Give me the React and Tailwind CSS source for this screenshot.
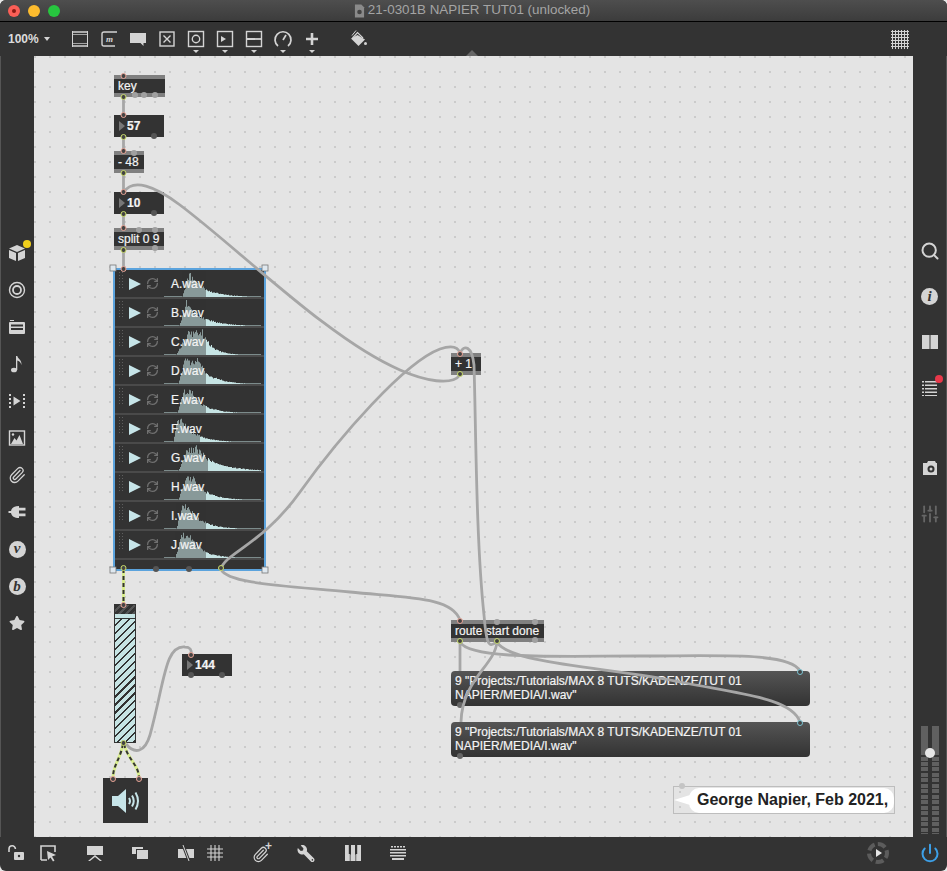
import React from 'react';
import { FaStar, FaWrench } from 'react-icons/fa';
import { Paperclip, Search, SlidersVertical, Power, RefreshCw } from 'lucide-react';

const files = [
  { name: 'A.wav', start: 18, peak: 25, flat: 0, tau: 16, played: 42, seed: 3 },
  { name: 'B.wav', start: 15, peak: 22, flat: 0, tau: 17, played: 42, seed: 7 },
  { name: 'C.wav', start: 12, peak: 24, flat: 14, tau: 10, played: 42, seed: 11 },
  { name: 'D.wav', start: 14, peak: 20, flat: 14, tau: 13, played: 42, seed: 5 },
  { name: 'E.wav', start: 13, peak: 20, flat: 6, tau: 13, played: 42, seed: 9 },
  { name: 'F.wav', start: 9, peak: 13, flat: 4, tau: 14, played: 36, seed: 2 },
  { name: 'G.wav', start: 14, peak: 24, flat: 8, tau: 20, played: 44, seed: 13 },
  { name: 'H.wav', start: 14, peak: 22, flat: 6, tau: 14, played: 42, seed: 4 },
  { name: 'I.wav', start: 12, peak: 18, flat: 6, tau: 14, played: 42, seed: 8 },
  { name: 'J.wav', start: 11, peak: 17, flat: 8, tau: 13, played: 42, seed: 6 },
];

function wavePath(f) {
  let d = 'M0 26';
  for (let x = 0; x < 97; x++) {
    const n = 0.68 + 0.32 * Math.abs(Math.sin((x + 1) * f.seed * 12.9898) * 3.7 % 1);
    let a = 0;
    if (x >= f.start && x < f.peak) a = (x - f.start) / (f.peak - f.start);
    else if (x >= f.peak && x < f.peak + f.flat) a = 1;
    else if (x >= f.peak + f.flat) a = Math.exp(-(x - f.peak - f.flat) / f.tau);
    const h = Math.max(0.6, a * n * 26);
    d += ` L${x} ${(26 - h).toFixed(1)} L${x + 1} ${(26 - h).toFixed(1)}`;
  }
  return d + ' L97 26 Z';
}

const Svg = ({ children, className = 'w-5 h-5 text-[#d4d4d4]', box = '0 0 20 20' }) => (
  <svg viewBox={box} className={className} fill="currentColor">{children}</svg>
);

const line = { fill: 'none', stroke: 'currentColor', strokeWidth: 1.4 };

const topIcons = [
  { drop: false, el: <Svg><path {...line} d="M2.500 2v16M17.500 2v16" strokeWidth="1" /><path {...line} strokeWidth="1.600" d="M2 3h16M2 17h16" /><path {...line} strokeWidth="1" d="M3 5.500h14M3 14.500h14" opacity=".7" /></Svg> },
  { drop: false, el: <Svg><path {...line} d="M16 17H5q-2 0-2-2V5q0-2 2-2h13" /><text x="7" y="13" fontFamily="Liberation Serif, serif" fontStyle="italic" fontWeight="700" fontSize="9">m</text></Svg> },
  { drop: false, el: <Svg><path d="M2 4h16v10h-2.500v3l-3-3H2z" /></Svg> },
  { drop: false, el: <Svg><rect x="3" y="3" width="14" height="14" {...line} /><path {...line} d="M6.500 6.500l7 7M13.500 6.500l-7 7" /></Svg> },
  { drop: true, el: <Svg><rect x="2.500" y="2.500" width="15" height="15" {...line} /><circle cx="10" cy="10" r="3.700" {...line} /></Svg> },
  { drop: true, el: <Svg><rect x="2.500" y="2.500" width="15" height="15" {...line} /><path d="M6 7l5 3-5 3z" /></Svg> },
  { drop: true, el: <Svg><rect x="2.500" y="2.500" width="15" height="15" {...line} /><path d="M3 10h14" {...line} strokeWidth="1.800" /></Svg> },
  { drop: true, el: <Svg><path {...line} strokeWidth="1.700" d="M5 17a8 8 0 1 1 10 0" /><path {...line} strokeWidth="1.700" d="M10 11l3-5" /></Svg> },
  { drop: true, el: <Svg><path d="M8.700 4h2.600v4.700H16v2.600h-4.700V16H8.700v-4.700H4V8.700h4.700z" /></Svg> },
];

const leftIcons = [
  <span className="relative flex" key="pkg">
    <Svg><path d="M10 2l8 3.500-8 3.500-8-3.500zM2 7l7 3v8l-7-3zM18 7l-7 3v8l7-3z" /></Svg>
    <span className="absolute -top-[3px] -right-[4px] w-2 h-2 rounded-full bg-[#f0cf1c]" />
  </span>,
  <Svg key="target"><circle cx="10" cy="10" r="7.500" {...line} /><circle cx="10" cy="10" r="4" {...line} strokeWidth="1.800" /></Svg>,
  <Svg key="tv"><rect x="2" y="5" width="16" height="12" rx="1" /><path d="M4 7.500h12v2H4zM4 11h12v2H4z" fill="#333" /><path d="M3 3h4v1H3z" /></Svg>,
  <Svg key="note"><ellipse cx="7" cy="16" rx="3" ry="2.300" /><path d="M9 16V2h1.300c.5 3 5 4 4 9-.5-3-2.500-4-4-4.500V16z" /></Svg>,
  <Svg key="film"><path d="M2 3h2v2H2zM2 7h2v2H2zM2 11h2v2H2zM2 15h2v2H2zM16 3h2v2h-2zM16 7h2v2h-2zM16 11h2v2h-2zM16 15h2v2h-2zM6.500 5.500l7 4.500-7 4.500z" /></Svg>,
  <Svg key="image"><rect x="2.500" y="3" width="15" height="14" {...line} /><path d="M4 16l3.500-6 2 2.500 3-5.500 3.500 9z" /><circle cx="6" cy="6.500" r="1.200" /></Svg>,
  <Paperclip key="clip" className="w-[18px] h-[18px] text-[#d4d4d4]" strokeWidth={1.7} />,
  <Svg key="plug"><path d="M1.500 9h2.500c.5-3 3.500-5 8-5v12c-4.500 0-7.500-2-8-5H1.500zM12 5.800h6.500v2.600H12zM12 11.600h6.500v2.600H12z" /></Svg>,
  <span key="v" className="flex items-center justify-center w-[17px] h-[17px] rounded-full bg-[#d4d4d4] text-[#333] font-['Liberation_Serif',serif] italic font-bold text-[15px] leading-none pb-[2px]">v</span>,
  <span key="b" className="flex items-center justify-center w-[17px] h-[17px] rounded-full bg-[#d4d4d4] text-[#333] font-['Liberation_Serif',serif] italic font-bold text-[15px] leading-none">b</span>,
  <FaStar key="star" className="w-[16px] h-[16px] text-[#d4d4d4]" />,
];

const Box = ({ pos, label }) => (
  <div className={`absolute ${pos} h-[22px] flex flex-col bg-[#808080]`}>
    <div className="mt-1 h-[14px] bg-[#333] text-[#f4f4f4] text-[12px] leading-[14px] pl-1 whitespace-nowrap">{label}</div>
  </div>
);

const NumBox = ({ pos, label }) => (
  <div className={`absolute ${pos} w-[50px] h-[22px] bg-[#333] flex items-center pl-[5px] gap-[2px] text-[#f4f4f4] text-[12px] font-bold`}>
    <span className="w-0 h-0 border-y-[5.5px] border-y-transparent border-l-[6px] border-l-[#777]" />
    {label}
  </div>
);

const Msg = ({ pos }) => (
  <div className={`absolute ${pos} left-[417px] w-[359px] h-[35px] rounded-[4px] bg-gradient-to-b from-[#555] to-[#333] text-[#f4f4f4] text-[12px] leading-[14px] pl-1 pt-[3px]`}>
    9 "Projects:/Tutorials/MAX 8 TUTS/KADENZE/TUT 01<br />NAPIER/MEDIA/I.wav"
  </div>
);

const inlet = '#e9a496';
const outlet = '#c9dc6a';

const greyCords = [
  'M123.500 97V115', 'M123.500 137V151', 'M123.500 173V192', 'M123.500 214V228', 'M123.500 250V268',
  'M460 375C452 386 425 381 400 370C330 340 240 250 180 205C155 186 133 178 124 192',
  'M221 569C225 553 262 545 300 492C340 436 405 362 440 349C452 345 458 347 460 353',
  'M221 569C226 584 290 586 350 592C410 598 452 597 460 620',
  'M460 353C464 344 472 346 474 365C476 430 476 540 484 615C486 640 488 650 496 642',
  'M460 642V671',
  'M460 642C470 660 560 656 640 656C720 656 790 652 800 671',
  'M497 642C510 665 620 668 680 682C740 694 792 698 800 722',
  'M497 642C495 665 462 680 461 722',
  'M126 744C135 755 145 752 150 735C165 680 165 645 185 647C190 647 192 650 191 654',
];

const signalCords = [
  'M123.500 569V604',
  'M123 744C120 760 113 765 113 778',
  'M124 744C128 760 139 765 139 778',
];

const ports = [
  [123.5, 76, inlet], [123.5, 97, outlet], [123.5, 115, inlet], [123.5, 137, outlet], [123.5, 151, inlet], [123.5, 173, outlet],
  [123.5, 192, inlet], [123.5, 214, outlet], [123.5, 228, inlet], [123.5, 250, outlet], [123.5, 269, inlet],
  [123.5, 568, outlet], [221, 568, outlet], [123.5, 605, inlet], [123.5, 743, outlet], [191, 655, inlet], [113, 779, inlet], [139, 779, inlet],
  [460, 354, inlet], [460, 374, outlet], [460, 621, inlet], [460, 641, outlet], [497, 641, outlet], [800, 672, '#7cc4d4'], [800, 723, '#7cc4d4'],
];

const bumps = [
  [135, 95, '#a0a0a0'], [144, 95, '#a0a0a0'], [155, 95, '#a0a0a0'], [154, 136, '#555'], [134, 153, '#a0a0a0'], [154, 213, '#555'],
  [139, 230, '#a0a0a0'], [155, 230, '#a0a0a0'], [155, 248, '#a0a0a0'], [156, 569, '#555'], [189, 569, '#555'], [191, 675, '#555'], [222, 675, '#555'],
  [497, 622, '#a0a0a0'], [535, 622, '#a0a0a0'], [535, 640, '#a0a0a0'], [460, 705, '#666'], [460, 756, '#666'], [682, 786, '#c4c4c4'],
];

const handles = [[113, 268], [265, 268], [113, 570], [265, 570]];

export default function App() {
  return (
    <div className="w-[947px] h-[871px] bg-[#e8e8e8] font-['Liberation_Sans',Arial,sans-serif]">
      <div className="w-full h-full flex flex-col rounded-[6px] overflow-hidden bg-[#333]">
        {/* title bar */}
        <div className="relative h-[22px] shrink-0 flex items-center justify-center bg-gradient-to-b from-[#4e4e4e] to-[#3c3c3c] border-b border-black">
          <div className="absolute left-2 top-[5px] flex gap-2">
            <span className="flex items-center justify-center w-3 h-3 rounded-full bg-[#fb5f57]"><span className="w-1 h-1 rounded-full bg-[#8a1a14]" /></span>
            <span className="w-3 h-3 rounded-full bg-[#fdbc2e]" />
            <span className="w-3 h-3 rounded-full bg-[#27c63f]" />
          </div>
          <svg viewBox="0 0 12 14" className="w-[11px] h-[14px] -ml-[3px]"><path d="M1 0h7l3 3v11H1z" fill="#8a8a8a" /><circle cx="6" cy="8" r="2.500" fill="#444" /></svg>
          <span className="text-[13.400px] text-[#a4a4a4] ml-[3px]">21-0301B NAPIER TUT01 (unlocked)</span>
        </div>

        {/* toolbar */}
        <div className="relative h-[34px] shrink-0 flex items-center text-[#d4d4d4]">
          <div className="w-[65px] pl-2 flex items-center gap-[5px] text-[12px] font-bold text-[#dcdcdc]">
            100%
            <span className="w-0 h-0 border-x-[3px] border-x-transparent border-t-[4px] border-t-[#d4d4d4]" />
          </div>
          {topIcons.map((t, i) => (
            <div key={i} className="relative w-[29px] h-5 flex justify-center">
              {t.el}
              {t.drop && <span className="absolute -bottom-[4px] w-0 h-0 border-x-[3px] border-x-transparent border-t-[3px] border-t-[#d4d4d4]" />}
            </div>
          ))}
          <div className="ml-[17px] w-[29px] flex justify-center">
            <Svg><path d="M9.500 6l7.500 4.500-6.500 6.500-7.500-7.500z" /><path d="M4.500 9l5-5.500 5.500 5.500" {...line} strokeWidth="1.200" /><path d="M4 6.500l4-5" {...line} strokeWidth="1" /><circle cx="17.500" cy="14.500" r="1.500" /></Svg>
          </div>
          <div className="ml-auto mr-[38px] w-[18px] h-[19px] bg-[radial-gradient(circle,#d4d4d4_1px,transparent_1.200px)] bg-[length:3px_3px]" />
          <span className="absolute left-[466px] bottom-0 w-0 h-0 border-x-[6px] border-x-transparent border-b-[6px] border-b-[#666]" />
        </div>

        {/* middle */}
        <div className="flex h-[781px] shrink-0">
          <div className="w-[34px] shrink-0 border-l border-[#555] pt-[187px] flex flex-col items-center gap-[17px] pr-[1px]">
            {leftIcons.map((icon, i) => (
              <div key={i} className="h-5 flex items-center justify-center">{icon}</div>
            ))}
          </div>

          {/* patcher canvas */}
          <div className="relative w-[879px] shrink-0 overflow-hidden bg-[#e4e4e4] bg-[radial-gradient(circle_at_1px_1px,#c2c2c2_0.6px,transparent_1px)] bg-[length:15px_15px] [-webkit-text-stroke:0.2px_currentColor]">
            <Box pos="left-[80px] top-[19px] w-[51px]" label="key" />
            <NumBox pos="left-[80px] top-[59px]" label="57" />
            <Box pos="left-[80px] top-[95px] w-[30px]" label="- 48" />
            <NumBox pos="left-[80px] top-[136px]" label="10" />
            <Box pos="left-[80px] top-[172px] w-[50px]" label="split 0 9" />

            {/* playlist */}
            <div className="absolute left-[79px] top-[212px] w-[153px] h-[303px] border-2 border-[#5ba3dd] bg-[#333] flex flex-col">
              {files.map((f) => (
                <div key={f.name} className="relative h-[29px] shrink-0 flex items-center border-b-2 border-[#4a4a4a] pl-[3px]">
                  <span className="w-[6px] h-[17px] self-start mt-[1px] bg-[radial-gradient(circle,#5e5e5e_1px,transparent_1px)] bg-[length:3px_3px]" />
                  <span className="ml-[5px] w-0 h-0 border-y-[6.500px] border-y-transparent border-l-[12px] border-l-[#c6e4e8]" />
                  <RefreshCw className="ml-[5px] w-[13px] h-[13px] text-[#707070]" strokeWidth={2.4} />
                  <svg viewBox="0 0 97 26" className="absolute left-[49px] bottom-0 w-[97px] h-[26px]">
                    <path d={wavePath(f)} fill="#c6e4e4" />
                    <rect x={f.start} y="0" width={f.played - f.start} height="26" fill="#333" opacity=".42" />
                  </svg>
                  <span className="absolute left-[56px] text-[#f4f4f4] text-[12px]">{f.name}</span>
                </div>
              ))}
            </div>

            {/* gain~ */}
            <div className="absolute left-[80px] top-[548px] w-[22px] h-[139px] border border-[#333] flex flex-col bg-[#c6e4e4]">
              <div className="h-[9px] shrink-0 bg-[repeating-linear-gradient(135deg,#333_0px,#333_3px,#555_3px,#555_5px)]" />
              <div className="h-[5px] shrink-0 border-b border-[#333]" />
              <div className="grow bg-[repeating-linear-gradient(135deg,#c6e4e4_0px,#c6e4e4_4px,#333_4px,#333_5.600px)]" />
            </div>

            <NumBox pos="left-[148px] top-[598px]" label="144" />

            {/* ezdac~ */}
            <div className="absolute left-[69px] top-[722px] w-[45px] h-[45px] bg-[#333] flex items-center justify-center">
              <svg viewBox="0 0 30 26" className="w-[30px] h-[26px]">
                <path d="M1 8h6l8-7v24l-8-7H1z" fill="#c6e4e8" />
                <path d="M18 10q2 3 0 6M21 7.500q3.500 5.500 0 11M24.500 4.500q5 8.500 0 17" fill="none" stroke="#c6e4e8" strokeWidth="2" />
              </svg>
            </div>

            <Box pos="left-[417px] top-[297px] w-[30px]" label="+ 1" />
            <Box pos="left-[417px] top-[564px] w-[93px]" label="route start done" />
            <Msg pos="top-[615px]" />
            <Msg pos="top-[666px]" />

            {/* comment */}
            <div className="absolute left-[639px] top-[730px] w-[222px] h-[28px] border border-[#bdbdbd] flex items-center">
              <svg viewBox="0 0 16 12" className="w-4 h-3 shrink-0"><path d="M0 6l16-5v10z" fill="#fff" /></svg>
              <div className="grow h-[25px] bg-white rounded-[10px] -ml-[1px] pl-2 flex items-center text-[#222] text-[16px] font-bold whitespace-nowrap [-webkit-text-stroke:0]">George Napier, Feb 2021,</div>
            </div>

            {/* patch cords */}
            <svg viewBox="34 56 879 781" className="absolute inset-0 w-[879px] h-[781px] pointer-events-none" fill="none">
              {bumps.map(([x, y, c], i) => <circle key={i} cx={x} cy={y} r="3" fill={c} />)}
              {greyCords.map((d, i) => <path key={i} d={d} stroke="#a6a6a6" strokeWidth="2.800" />)}
              {signalCords.map((d, i) => (
                <g key={i}>
                  <path d={d} stroke="#d9ee8e" strokeWidth="3" />
                  <path d={d} stroke="#333" strokeWidth="2" strokeDasharray="4 3" />
                </g>
              ))}
              {ports.map(([x, y, c], i) => <circle key={i} cx={x} cy={y} r="2.500" fill="#444" stroke={c} strokeWidth="1" />)}
              {handles.map(([x, y], i) => <rect key={i} x={x - 3} y={y - 3} width="6" height="6" fill="#dfe8ef" stroke="#777" strokeWidth=".8" />)}
            </svg>
          </div>

          {/* right sidebar */}
          <div className="w-[34px] shrink-0 flex flex-col items-center pt-[185px] border-r border-[#555]">
            <Search className="w-5 h-5 text-[#d4d4d4]" strokeWidth={2.4} />
            <span className="mt-[27px] flex items-center justify-center w-[17px] h-[17px] rounded-full bg-[#d4d4d4] text-[#333] font-['Liberation_Serif',serif] italic font-bold text-[15px] leading-none">i</span>
            <Svg className="mt-[27px] w-5 h-5 text-[#d4d4d4]"><path d="M2 3h7.500v14H2zM10.500 3H18v14h-7.500z" /></Svg>
            <span className="relative mt-[26px] flex">
              <Svg><path d="M2 3h2v1.500H2zM5 3h12v1.500H5zM2 6.500h2V8H2zM5 6.500h12V8H5zM2 10h2v1.500H2zM5 10h12v1.500H5zM2 13.500h2V15H2zM5 13.500h12V15H5zM2 17h2v1H2zM5 17h12v1H5z" /></Svg>
              <span className="absolute -top-[3px] -right-[3px] w-2 h-2 rounded-full bg-[#e8384a]" />
            </span>
            <Svg className="mt-[60px] w-5 h-5 text-[#d4d4d4]"><path d="M3 5h4l1-2h7l1 2h1v12H3z" /><circle cx="11" cy="11" r="3.500" fill="#333" /><circle cx="11" cy="11" r="1.500" fill="#d4d4d4" /></Svg>
            <SlidersVertical className="mt-[26px] w-5 h-5 text-[#666]" strokeWidth={2.2} />

            {/* output level */}
            <div className="relative mt-auto mb-[3px] w-[18px] h-[108px] flex justify-between">
              {[0, 1].map((n) => (
                <div key={n} className="w-[7px] h-full flex flex-col">
                  <div className="h-[25px] shrink-0 bg-[#606060]" />
                  <div className="grow bg-[repeating-linear-gradient(180deg,#606060_0px,#606060_4px,#333_4px,#333_5.500px)]" />
                </div>
              ))}
              <span className="absolute left-[4px] top-[22px] w-[10px] h-[10px] rounded-full bg-[#e6e6e6]" />
            </div>
          </div>
        </div>

        {/* bottom bar */}
        <div className="h-[34px] shrink-0 flex items-center pb-[2px] text-[#d4d4d4]">
          <Svg className="ml-[7px] w-5 h-5"><path {...line} strokeWidth="1.600" d="M2 9V6a3.200 3.200 0 0 1 6.400 0" /><rect x="7" y="9" width="10" height="8" rx="1" /><circle cx="12" cy="13" r="1.200" fill="#333" /></Svg>
          <Svg className="ml-[11px] w-5 h-5"><path {...line} strokeWidth="1.600" d="M3 17V3h14v6M3 17h6" /><path d="M9 8l9 4-4 1.500 2.500 4-1.500 1-2.500-4-2.500 2.500z" /></Svg>
          <Svg className="ml-[27px] w-5 h-5"><path d="M2 3h16v9H2zM10 12l7 6h-2l-5-4-5 4H3z" /></Svg>
          <Svg className="ml-[25px] w-5 h-5"><path d="M2 4h11v2H6v5H2z" /><rect x="7" y="7" width="11" height="9" /></Svg>
          <Svg className="ml-[26px] w-5 h-5"><path d="M2 6h16v9H2z" /><path d="M7 2l6 16" stroke="#333" strokeWidth="3" /><path d="M7 2l6 16" stroke="currentColor" strokeWidth="1" /></Svg>
          <Svg className="ml-[9px] w-5 h-5"><path {...line} strokeWidth="1.100" d="M6 2v16M10 2v16M14 2v16M2 6h16M2 10h16M2 14h16" /></Svg>
          <span className="relative ml-[27px] w-5 h-5 flex items-center justify-start">
            <Paperclip className="w-[17px] h-[17px] mt-[2px]" strokeWidth={1.7} />
            <span className="absolute -top-[3px] right-0 text-[12px] leading-none font-bold">+</span>
          </span>
          <FaWrench className="ml-[25px] w-[18px] h-[17px] scale-x-[-1]" />
          <Svg className="ml-[28px] w-5 h-5"><path d="M2 2h3.800v9h1V18H2zM8 2h4v9.500h.5V18h-5v-6.500H8zM14.200 2H18v16h-4.800v-7h1z" /></Svg>
          <Svg className="ml-[25px] w-5 h-5"><path d="M3 3h2v1.500H3zM6 3h2v1.500H6zM9 3h2v1.500H9zM12 3h2v1.500h-2zM15 3h2v1.500h-2zM2 6h16v1.500H2zM2 9h16v1.500H2zM2 12h16v1.500H2zM4 15h12v2H4z" /></Svg>

          <div className="ml-auto relative w-[22px] h-[22px] rounded-full border-[4px] border-[#5c5c5c] border-dashed flex items-center justify-center">
            <span className="ml-[1px] w-0 h-0 border-y-[4px] border-y-transparent border-l-[6px] border-l-[#e4e4e4]" />
          </div>
          <Power className="ml-[31px] mr-[7px] w-5 h-5 text-[#3d9fe6]" strokeWidth={2.4} />
        </div>
      </div>
    </div>
  );
}
